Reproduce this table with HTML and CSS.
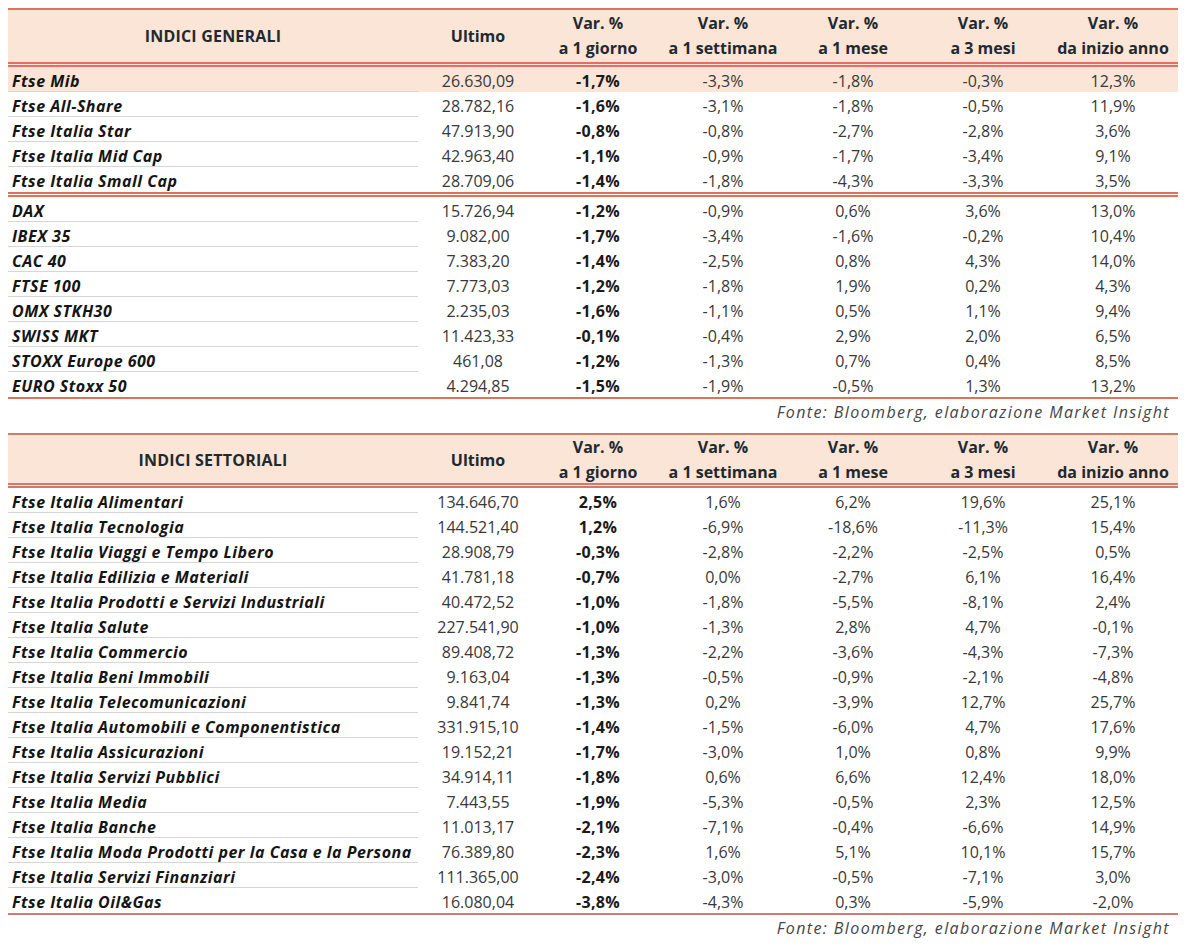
FILE: index.html
```html
<!DOCTYPE html>
<html lang="it">
<head>
<meta charset="utf-8">
<title>Indici</title>
<link rel="stylesheet" href="styles.css">
</head>
<body>
<div class="tbl t1">
  <div class="head">
    <div class="h-title">INDICI GENERALI</div>
    <div class="h-one">Ultimo</div>
    <div class="h-two"><span>Var. %</span><span>a 1 giorno</span></div>
    <div class="h-two"><span>Var. %</span><span>a 1 settimana</span></div>
    <div class="h-two"><span>Var. %</span><span>a 1 mese</span></div>
    <div class="h-two"><span>Var. %</span><span>a 3 mesi</span></div>
    <div class="h-two"><span>Var. %</span><span>da inizio anno</span></div>
  </div>
  <div class="row hl"><div class="name">Ftse Mib</div><div>26.630,09</div><div class="b">-1,7%</div><div>-3,3%</div><div>-1,8%</div><div>-0,3%</div><div>12,3%</div></div>
  <div class="row"><div class="name">Ftse All-Share</div><div>28.782,16</div><div class="b">-1,6%</div><div>-3,1%</div><div>-1,8%</div><div>-0,5%</div><div>11,9%</div></div>
  <div class="row"><div class="name">Ftse Italia Star</div><div>47.913,90</div><div class="b">-0,8%</div><div>-0,8%</div><div>-2,7%</div><div>-2,8%</div><div>3,6%</div></div>
  <div class="row"><div class="name">Ftse Italia Mid Cap</div><div>42.963,40</div><div class="b">-1,1%</div><div>-0,9%</div><div>-1,7%</div><div>-3,4%</div><div>9,1%</div></div>
  <div class="row sep"><div class="name">Ftse Italia Small Cap</div><div>28.709,06</div><div class="b">-1,4%</div><div>-1,8%</div><div>-4,3%</div><div>-3,3%</div><div>3,5%</div></div>
  <div class="row"><div class="name">DAX</div><div>15.726,94</div><div class="b">-1,2%</div><div>-0,9%</div><div>0,6%</div><div>3,6%</div><div>13,0%</div></div>
  <div class="row"><div class="name">IBEX 35</div><div>9.082,00</div><div class="b">-1,7%</div><div>-3,4%</div><div>-1,6%</div><div>-0,2%</div><div>10,4%</div></div>
  <div class="row"><div class="name">CAC 40</div><div>7.383,20</div><div class="b">-1,4%</div><div>-2,5%</div><div>0,8%</div><div>4,3%</div><div>14,0%</div></div>
  <div class="row"><div class="name">FTSE 100</div><div>7.773,03</div><div class="b">-1,2%</div><div>-1,8%</div><div>1,9%</div><div>0,2%</div><div>4,3%</div></div>
  <div class="row"><div class="name">OMX STKH30</div><div>2.235,03</div><div class="b">-1,6%</div><div>-1,1%</div><div>0,5%</div><div>1,1%</div><div>9,4%</div></div>
  <div class="row"><div class="name">SWISS MKT</div><div>11.423,33</div><div class="b">-0,1%</div><div>-0,4%</div><div>2,9%</div><div>2,0%</div><div>6,5%</div></div>
  <div class="row"><div class="name">STOXX Europe 600</div><div>461,08</div><div class="b">-1,2%</div><div>-1,3%</div><div>0,7%</div><div>0,4%</div><div>8,5%</div></div>
  <div class="row last"><div class="name">EURO Stoxx 50</div><div>4.294,85</div><div class="b">-1,5%</div><div>-1,9%</div><div>-0,5%</div><div>1,3%</div><div>13,2%</div></div>
</div>
<div class="fonte">Fonte: Bloomberg, elaborazione Market Insight</div>

<div class="tbl t2">
  <div class="head">
    <div class="h-title">INDICI SETTORIALI</div>
    <div class="h-one">Ultimo</div>
    <div class="h-two"><span>Var. %</span><span>a 1 giorno</span></div>
    <div class="h-two"><span>Var. %</span><span>a 1 settimana</span></div>
    <div class="h-two"><span>Var. %</span><span>a 1 mese</span></div>
    <div class="h-two"><span>Var. %</span><span>a 3 mesi</span></div>
    <div class="h-two"><span>Var. %</span><span>da inizio anno</span></div>
  </div>
  <div class="row"><div class="name">Ftse Italia Alimentari</div><div>134.646,70</div><div class="b">2,5%</div><div>1,6%</div><div>6,2%</div><div>19,6%</div><div>25,1%</div></div>
  <div class="row"><div class="name">Ftse Italia Tecnologia</div><div>144.521,40</div><div class="b">1,2%</div><div>-6,9%</div><div>-18,6%</div><div>-11,3%</div><div>15,4%</div></div>
  <div class="row"><div class="name">Ftse Italia Viaggi e Tempo Libero</div><div>28.908,79</div><div class="b">-0,3%</div><div>-2,8%</div><div>-2,2%</div><div>-2,5%</div><div>0,5%</div></div>
  <div class="row"><div class="name">Ftse Italia Edilizia e Materiali</div><div>41.781,18</div><div class="b">-0,7%</div><div>0,0%</div><div>-2,7%</div><div>6,1%</div><div>16,4%</div></div>
  <div class="row"><div class="name">Ftse Italia Prodotti e Servizi Industriali</div><div>40.472,52</div><div class="b">-1,0%</div><div>-1,8%</div><div>-5,5%</div><div>-8,1%</div><div>2,4%</div></div>
  <div class="row"><div class="name">Ftse Italia Salute</div><div>227.541,90</div><div class="b">-1,0%</div><div>-1,3%</div><div>2,8%</div><div>4,7%</div><div>-0,1%</div></div>
  <div class="row"><div class="name">Ftse Italia Commercio</div><div>89.408,72</div><div class="b">-1,3%</div><div>-2,2%</div><div>-3,6%</div><div>-4,3%</div><div>-7,3%</div></div>
  <div class="row"><div class="name">Ftse Italia Beni Immobili</div><div>9.163,04</div><div class="b">-1,3%</div><div>-0,5%</div><div>-0,9%</div><div>-2,1%</div><div>-4,8%</div></div>
  <div class="row"><div class="name">Ftse Italia Telecomunicazioni</div><div>9.841,74</div><div class="b">-1,3%</div><div>0,2%</div><div>-3,9%</div><div>12,7%</div><div>25,7%</div></div>
  <div class="row"><div class="name">Ftse Italia Automobili e Componentistica</div><div>331.915,10</div><div class="b">-1,4%</div><div>-1,5%</div><div>-6,0%</div><div>4,7%</div><div>17,6%</div></div>
  <div class="row"><div class="name">Ftse Italia Assicurazioni</div><div>19.152,21</div><div class="b">-1,7%</div><div>-3,0%</div><div>1,0%</div><div>0,8%</div><div>9,9%</div></div>
  <div class="row"><div class="name">Ftse Italia Servizi Pubblici</div><div>34.914,11</div><div class="b">-1,8%</div><div>0,6%</div><div>6,6%</div><div>12,4%</div><div>18,0%</div></div>
  <div class="row"><div class="name">Ftse Italia Media</div><div>7.443,55</div><div class="b">-1,9%</div><div>-5,3%</div><div>-0,5%</div><div>2,3%</div><div>12,5%</div></div>
  <div class="row"><div class="name">Ftse Italia Banche</div><div>11.013,17</div><div class="b">-2,1%</div><div>-7,1%</div><div>-0,4%</div><div>-6,6%</div><div>14,9%</div></div>
  <div class="row"><div class="name">Ftse Italia Moda Prodotti per la Casa e la Persona</div><div>76.389,80</div><div class="b">-2,3%</div><div>1,6%</div><div>5,1%</div><div>10,1%</div><div>15,7%</div></div>
  <div class="row"><div class="name">Ftse Italia Servizi Finanziari</div><div>111.365,00</div><div class="b">-2,4%</div><div>-3,0%</div><div>-0,5%</div><div>-7,1%</div><div>3,0%</div></div>
  <div class="row last"><div class="name">Ftse Italia Oil&amp;Gas</div><div>16.080,04</div><div class="b">-3,8%</div><div>-4,3%</div><div>0,3%</div><div>-5,9%</div><div>-2,0%</div></div>
</div>
<div class="fonte">Fonte: Bloomberg, elaborazione Market Insight</div>
</body>
</html>
```

FILE: styles.css
```css
html, body {
  background: #ffffff;
}
body {
  margin: 8px;
  font-family: "Open Sans", "Liberation Sans", sans-serif;
  font-size: 16px;
  color: #383838;
}
.tbl {
  width: 1170px;
  --line: #e2705f;
}
.t2 {
  margin-top: 9px;
  --line: #cf7b6c;
}
.head {
  display: grid;
  grid-template-columns: 410px 120px 120px 130px 130px 130px 130px;
  height: 52px;
  background: #fbe5d6;
  border-top: 2px solid var(--line);
  border-bottom: 5px double var(--line);
  box-sizing: content-box;
  color: #1e2a30;
  font-weight: 700;
}
.t2 .head {
  height: 48px;
}
.head > div {
  display: flex;
  flex-direction: column;
  align-items: center;
  justify-content: center;
  text-align: center;
}
.h-title {
  letter-spacing: 0.2px;
}
.h-two span {
  display: block;
  line-height: 25px;
}
.row {
  display: grid;
  grid-template-columns: 410px 120px 120px 130px 130px 130px 130px;
  height: 25px;
}
.row > div {
  text-align: center;
  box-sizing: border-box;
  height: 25px;
  padding-top: 2px;
  line-height: 24px;
  white-space: nowrap;
}
.row > .name {
  text-align: left;
  padding-left: 4px;
  font-weight: 700;
  font-style: italic;
  letter-spacing: 0.5px;
  color: #151515;
  border-bottom: 1px solid #d6d6d6;
}
.row > .b {
  font-weight: 700;
  color: #1a1a1a;
  letter-spacing: 0.3px;
}
.row.hl {
  background: #fbe5d6;
}
.row.sep {
  border-bottom: 5px double var(--line);
  box-sizing: content-box;
}
.row.last {
  border-bottom: 2px solid var(--line);
  box-sizing: content-box;
}
.row.sep > .name,
.row.last > .name {
  border-bottom: none;
}
.fonte {
  width: 1170px;
  height: 25px;
  line-height: 25px;
  padding-top: 1px;
  text-align: right;
  padding-right: 8px;
  box-sizing: border-box;
  font-style: italic;
  letter-spacing: 1.4px;
  color: #444444;
}
```
